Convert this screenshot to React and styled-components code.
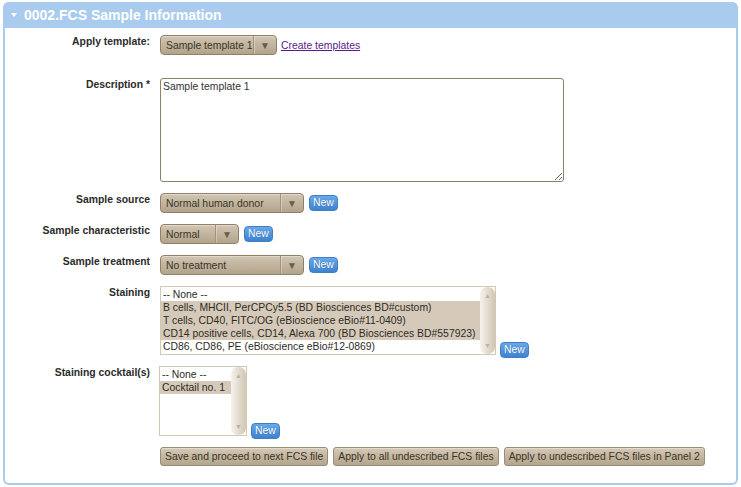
import styled, { createGlobalStyle } from "styled-components";

const GlobalStyle = createGlobalStyle`
    body {
        margin: 0;
        background: #ffffff;
        font-family: "Liberation Sans", Arial, sans-serif;
    }
`;

const Panel = styled.div`
    margin: 2px 3px;
    border: 2px solid #a9ccee;
    border-top: none;
    border-radius: 6px;
    height: 483px;
    box-sizing: border-box;
`;

const Header = styled.div`
    display: flex;
    align-items: center;
    height: 26px;
    margin: 0 -2px;
    padding-left: 8px;
    background: #a9ccee;
    border-radius: 6px 6px 0 0;
    color: #ffffff;
    font-size: 14px;
    font-weight: bold;
`;

const Caret = styled.span`
    width: 0;
    height: 0;
    border-left: 3px solid transparent;
    border-right: 3px solid transparent;
    border-top: 4px solid #ffffff;
    margin-right: 7px;
`;

const Body = styled.div`
    display: flex;
    flex-direction: column;
    gap: 11px;
    padding-top: 7px;
`;

const Row = styled.div`
    display: grid;
    grid-template-columns: 145px 1fr;
    column-gap: 10px;
    margin-bottom: ${p => p.$after || 0}px;
`;

const Label = styled.div`
    text-align: right;
    font-size: 10.4px;
    font-weight: bold;
    color: #2b2b2b;
    padding-top: 1px;
`;

const Controls = styled.div`
    display: flex;
    align-items: ${p => (p.$bottom ? "flex-end" : "center")};
    gap: ${p => p.$gap || 5}px;
`;

const Select = styled.div`
    display: flex;
    align-items: stretch;
    width: ${p => p.$w}px;
    height: 20px;
    box-sizing: border-box;
    border: 1px solid #8f806a;
    border-radius: 4px;
    background: linear-gradient(#d2c6b2, #b2a38b);
    box-shadow: inset 0 1px 0 rgba(255, 255, 255, 0.35);
    color: #3a3528;
    font-size: 10.4px;
`;

const SelectText = styled.span`
    flex: 1;
    display: flex;
    align-items: center;
    padding-left: 5px;
    white-space: nowrap;
    overflow: hidden;
`;

const SelectArrow = styled.span`
    width: 22px;
    display: flex;
    align-items: center;
    justify-content: center;
    border-left: 1px solid #a39479;
    box-shadow: inset 1px 0 0 rgba(255, 255, 255, 0.3);
    color: #695e4b;
    font-size: 10px;
`;

const NewButton = styled.button`
    height: 16px;
    padding: 0 3px;
    border: 1px solid #3f7fc6;
    border-radius: 4px;
    background: linear-gradient(#69a8e8, #3f82cf);
    color: #ffffff;
    font-family: "Liberation Sans", Arial, sans-serif;
    font-size: 10.4px;
    line-height: 14px;
    text-shadow: 0 0 1px rgba(0, 40, 90, 0.4);
    margin-bottom: ${p => (p.$drop ? -3 : 0)}px;
`;

const Link = styled.a`
    color: #551a8b;
    font-size: 10.4px;
    text-decoration: underline;
`;

const TextArea = styled.textarea`
    width: 404px;
    height: 104px;
    box-sizing: border-box;
    margin: 0;
    padding: 2px 2px;
    border: 1px solid #8f806a;
    border-radius: 3px;
    font-family: "Liberation Sans", Arial, sans-serif;
    font-size: 10.4px;
    color: #333;
    resize: both;
    outline: none;
`;

const ListBox = styled.div`
    display: flex;
    width: ${p => p.$w}px;
    height: ${p => p.$h}px;
    box-sizing: border-box;
    border: 1px solid #d3c8b6;
    background: #ffffff;
    margin-left: ${p => p.$shift || 0}px;
`;

const Options = styled.div`
    flex: 1;
    overflow: hidden;
    padding-top: 1px;
`;

const Option = styled.div`
    height: 13px;
    line-height: 13px;
    padding-left: 2px;
    font-size: 10.4px;
    white-space: nowrap;
    color: #2e2b25;
    background: ${p => (p.$selected ? "#d5cab9" : "transparent")};
`;

const ScrollBar = styled.div`
    width: 15px;
    display: flex;
    flex-direction: column;
    justify-content: space-between;
    align-items: center;
    border-radius: 7px;
    background: linear-gradient(90deg, #f6f2ec, #ddd3c4 70%, #d2c6b3);
    color: #bdb2a0;
    font-size: 7px;
    padding: 5px 0;
`;

const Actions = styled.div`
    display: flex;
    gap: 5px;
`;

const ActionButton = styled.button`
    height: 19px;
    padding: 0 4px;
    border: 1px solid #9a8c75;
    border-radius: 3px;
    background: linear-gradient(#d5c9b5, #b3a58d);
    box-shadow: inset 0 1px 0 rgba(255, 255, 255, 0.35);
    color: #3a3528;
    font-family: "Liberation Sans", Arial, sans-serif;
    font-size: 10.4px;
    white-space: nowrap;
`;

function Dropdown({ width, value }) {
    return (
        <Select $w={width}>
            <SelectText>{value}</SelectText>
            <SelectArrow>▼</SelectArrow>
        </Select>
    );
}

function List({ width, height, items, selected, shift }) {
    return (
        <ListBox $w={width} $h={height} $shift={shift}>
            <Options>
                {items.map((item, i) => (
                    <Option key={item} $selected={selected.includes(i)}>{item}</Option>
                ))}
            </Options>
            <ScrollBar>
                <span>▲</span>
                <span>▼</span>
            </ScrollBar>
        </ListBox>
    );
}

const staining = [
    "-- None --",
    "B cells, MHCII, PerCPCy5.5 (BD Biosciences BD#custom)",
    "T cells, CD40, FITC/OG (eBioscience eBio#11-0409)",
    "CD14 positive cells, CD14, Alexa 700 (BD Biosciences BD#557923)",
    "CD86, CD86, PE (eBioscience eBio#12-0869)"
];

function App() {
    return (
        <>
            <GlobalStyle />
            <Panel>
                <Header>
                    <Caret />
                    0002.FCS Sample Information
                </Header>
                <Body>
                    <Row $after={12}>
                        <Label>Apply template:</Label>
                        <Controls $gap={4}>
                            <Dropdown width={117} value="Sample template 1" />
                            <Link href="#">Create templates</Link>
                        </Controls>
                    </Row>
                    <Row>
                        <Label>Description *</Label>
                        <Controls>
                            <TextArea defaultValue="Sample template 1" />
                        </Controls>
                    </Row>
                    <Row>
                        <Label>Sample source</Label>
                        <Controls>
                            <Dropdown width={144} value="Normal human donor" />
                            <NewButton>New</NewButton>
                        </Controls>
                    </Row>
                    <Row>
                        <Label>Sample characteristic</Label>
                        <Controls>
                            <Dropdown width={79} value="Normal" />
                            <NewButton>New</NewButton>
                        </Controls>
                    </Row>
                    <Row>
                        <Label>Sample treatment</Label>
                        <Controls>
                            <Dropdown width={144} value="No treatment" />
                            <NewButton>New</NewButton>
                        </Controls>
                    </Row>
                    <Row>
                        <Label>Staining</Label>
                        <Controls $bottom $gap={4}>
                            <List width={336} height={69} items={staining} selected={[1, 2, 3]} />
                            <NewButton $drop>New</NewButton>
                        </Controls>
                    </Row>
                    <Row>
                        <Label>Staining cocktail(s)</Label>
                        <Controls $bottom $gap={4}>
                            <List width={88} height={70} shift={-1} items={["-- None --", "Cocktail no. 1"]} selected={[1]} />
                            <NewButton $drop>New</NewButton>
                        </Controls>
                    </Row>
                    <Row>
                        <div />
                        <Actions>
                            <ActionButton>Save and proceed to next FCS file</ActionButton>
                            <ActionButton>Apply to all undescribed FCS files</ActionButton>
                            <ActionButton>Apply to undescribed FCS files in Panel 2</ActionButton>
                        </Actions>
                    </Row>
                </Body>
            </Panel>
        </>
    );
}

export default App;
